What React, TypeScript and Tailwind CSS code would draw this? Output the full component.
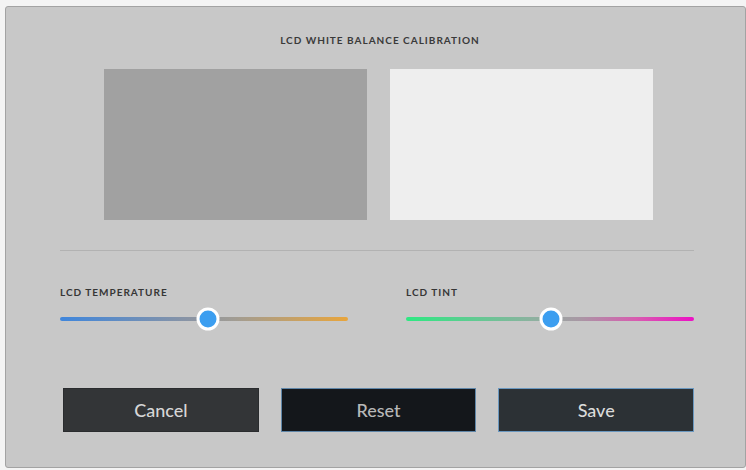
import React from "react";

const font = { fontFamily: "Lato, 'Open Sans', 'Liberation Sans', sans-serif" };

function Slider({ label, track, value }: { label: string; track: string; value: number }) {
  return (
    <div className="flex flex-col">
      <div className="h-[8px] text-[10px] leading-[8px] font-bold tracking-[0.1em] text-[#363636]">{label}</div>
      <div className="relative mt-[11px] h-[24px] flex items-center">
        <div className={`h-[4px] w-full rounded-full ${track}`} />
        <div
          className="absolute top-1/2 h-[23px] w-[23px] -translate-x-1/2 -translate-y-1/2 rounded-full border-[3px] border-white bg-[#3c9ef0]"
          style={{ left: `${value}%` }}
        />
      </div>
    </div>
  );
}

export default function App() {
  return (
    <div className="h-[470px] w-[746px] bg-[#f4f4f4] pl-[5px] pt-[6px]" style={font}>
      <div className="flex h-[462px] w-[741px] flex-col rounded-[3px] border border-[#a3a3a3] bg-[#c8c8c8] pl-[54px] pr-[51px] pt-[29px]">
        <div className="h-[8px] text-center text-[10px] leading-[8px] font-bold tracking-[0.1em] text-[#3a3a3a] pl-[6px]">
          LCD WHITE BALANCE CALIBRATION
        </div>

        <div className="mt-[25px] flex justify-center gap-[23px] pl-[2px]">
          <div className="h-[151px] w-[263px] bg-[#a1a1a1]" />
          <div className="h-[151px] w-[263px] bg-[#eeeeee]" />
        </div>

        <div className="mt-[30px] h-px bg-[#b2b2b2]" />

        <div className="mt-[37px] grid grid-cols-2 gap-[58px]">
          <Slider
            label="LCD TEMPERATURE"
            value={51.5}
            track="bg-[linear-gradient(90deg,#3f86dc_0%,#8a94a4_45%,#a09c94_60%,#e8a53c_100%)]"
          />
          <Slider
            label="LCD TINT"
            value={50.3}
            track="bg-[linear-gradient(90deg,#2ee882_0%,#8fb0a0_45%,#a898a4_60%,#d85cb0_80%,#ec10c4_100%)]"
          />
        </div>

        <div className="mt-[57px] grid grid-cols-3 gap-[22px] pl-[3px]">
          <button className="h-[44px] border border-[#2a2c2e] bg-[#333537] text-[18px] font-medium text-[#d6d6d6]">
            Cancel
          </button>
          <button className="h-[44px] border-[1.5px] border-[#5f86a8] bg-[#14171b] text-[18px] font-medium text-[#b8b8b8]">
            Reset
          </button>
          <button className="h-[44px] border-[1.5px] border-[#6a98c0] bg-[#2c3135] text-[18px] font-medium text-[#dadada]">
            Save
          </button>
        </div>
      </div>
    </div>
  );
}
